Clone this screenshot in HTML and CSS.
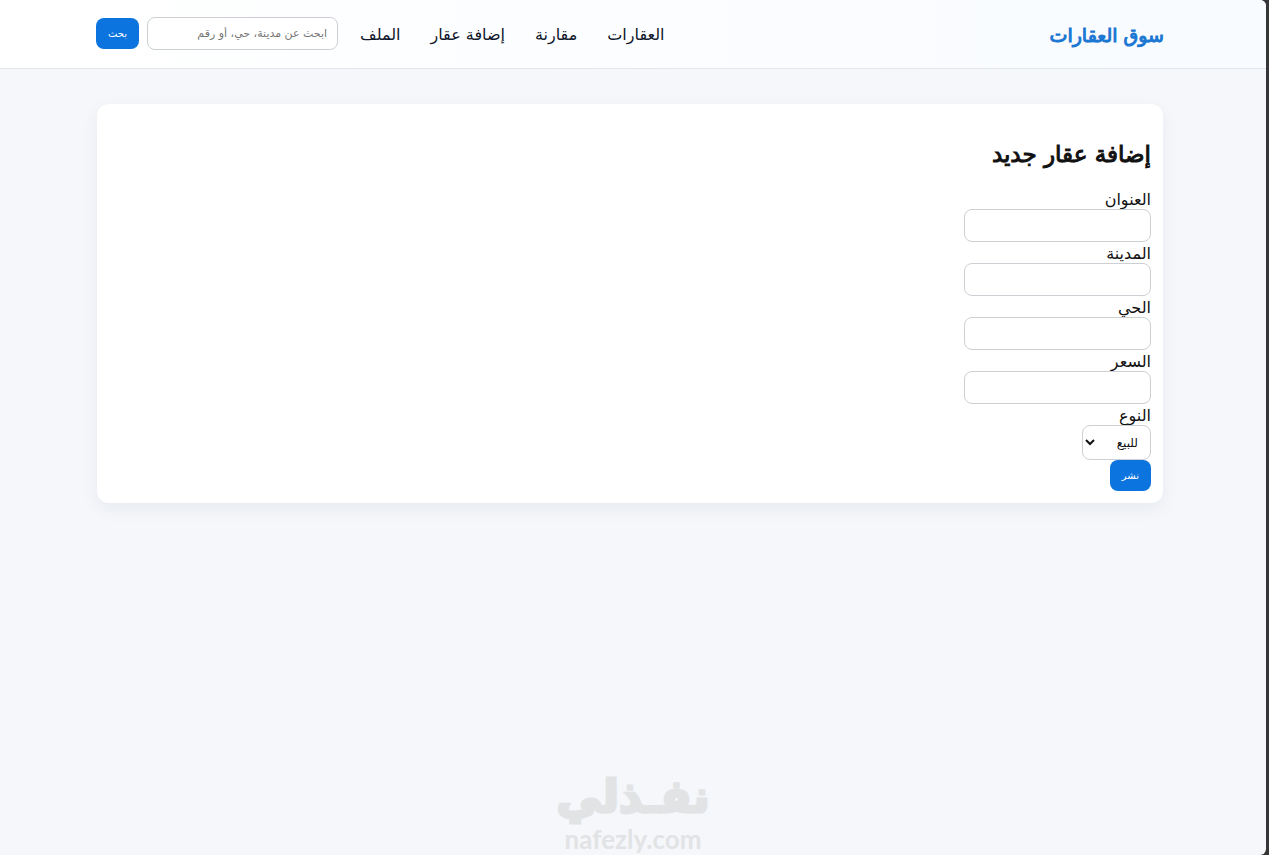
FILE: index.html
```html
<!DOCTYPE html>
<html lang="ar" dir="rtl">
<head>
<meta charset="utf-8">
<meta name="viewport" content="width=device-width, initial-scale=1">
<title>سوق العقارات</title>
<link rel="stylesheet" href="styles.css">
</head>
<body>
<div class="page">
  <header class="site-header">
    <div class="container bar">
      <a class="brand" href="#">سوق العقارات</a>
      <nav class="nav">
        <a href="#">العقارات</a>
        <a href="#">مقارنة</a>
        <a href="#">إضافة عقار</a>
        <a href="#">الملف</a>
      </nav>
      <form class="search">
        <input class="field search-field" type="search" aria-label="بحث" placeholder="ابحث عن مدينة، حي، أو رقم">
        <button class="btn" type="button">بحث</button>
      </form>
    </div>
  </header>
  <main class="content">
    <div class="container content-inner">
      <section class="card">
        <h1 class="title">إضافة عقار جديد</h1>
        <form class="form">
          <label for="title">العنوان</label>
          <input class="field" id="title" type="text">
          <label for="city">المدينة</label>
          <input class="field" id="city" type="text">
          <label for="district">الحي</label>
          <input class="field" id="district" type="text">
          <label for="price">السعر</label>
          <input class="field" id="price" type="text">
          <label for="kind">النوع</label>
          <select class="field select" id="kind"><option>للبيع</option><option>للإيجار</option></select>
          <button class="btn" type="button">نشر</button>
        </form>
      </section>
    </div>
  </main>
  <footer class="mark">
    <span class="mark-name">نفـذلي</span>
    <span class="mark-url" dir="ltr">nafezly.com</span>
  </footer>
</div>
</body>
</html>
```
FILE: styles.css
```css
* { box-sizing: border-box; }
body {
  margin: 0;
  background: #363636;
  color: #111;
  font: 16px/20px "DejaVu Sans", "Noto Sans", sans-serif;
}
.page {
  display: flex;
  flex-direction: column;
  min-height: 100vh;
  margin-right: 3px;
  overflow: hidden;
  background: #f5f7fb;
  border-radius: 0 6px 6px 0;
}
.container {
  width: 100%;
  max-width: 1100px;
  margin: 0 auto;
  padding: 0 16px;
}
.site-header {
  padding: 15px 6px 17px 0;
  background: linear-gradient(90deg, #fff, #f8fbff);
  border-bottom: 1px solid #e3e6ea;
}
.bar { display: flex; align-items: center; min-height: 36px; }
.brand {
  margin-left: auto;
  padding-top: 4px;
  color: #1976d2;
  font-size: 19px;
  line-height: 24px;
  -webkit-text-stroke: 1px #1976d2;
  text-decoration: none;
}
.nav { display: flex; gap: 30px; margin-left: 22px; padding-top: 4px; }
.nav a { color: #0f172a; text-decoration: none; }
.search { display: flex; align-items: center; gap: 8px; }
.field {
  width: 187px;
  height: 33px;
  padding: 0 10px;
  background: #fff;
  border: 1px solid #ccd0d4;
  border-radius: 8px;
  color: #111;
  font: 12px "DejaVu Sans", sans-serif;
}
.search-field { width: 191px; appearance: none; font-size: 11px; }
.search-field::placeholder { color: #757575; }
.btn {
  height: 31px;
  padding: 0 12px;
  background: #0b74de;
  border: 0;
  border-radius: 8px;
  color: #fff;
  font: 10px "DejaVu Sans", sans-serif;
}
.content { padding: 35px 6px 0 0; }
.content-inner { max-width: 1098px; }
.card {
  padding: 36px 12px 12px;
  background: #fff;
  border-radius: 12px;
  box-shadow: 0 6px 18px rgba(20, 30, 50, 0.06);
}
.title {
  margin: 0 0 20px;
  font-size: 23px;
  font-weight: 400;
  line-height: 28px;
  -webkit-text-stroke: 1px #111;
}
.form { display: flex; flex-direction: column; align-items: flex-start; }
.form label { height: 21px; line-height: 24px; }
.select { width: 69px; height: 35px; padding: 0 8px 0 0; }
.mark {
  display: flex;
  flex-direction: column;
  align-items: center;
  margin-top: auto;
  color: #e2e3e5;
}
.mark-name {
  font-size: 45px;
  font-weight: 700;
  line-height: 52px;
  -webkit-text-stroke: 3px #e2e3e5;
}
.mark-url { font: 700 26px/32px Lato, sans-serif; }
```
